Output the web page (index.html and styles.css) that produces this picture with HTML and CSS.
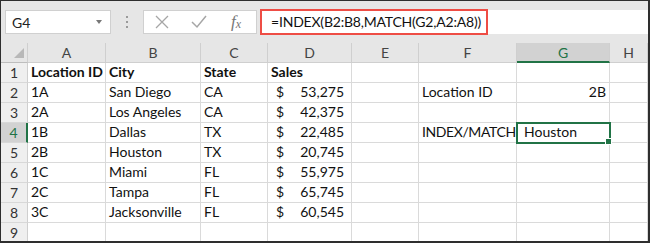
FILE: index.html
```html
<!DOCTYPE html>
<html lang="en">
<head>
  <meta charset="UTF-8" />
  <title>INDEX MATCH</title>
  <link rel="stylesheet" href="styles.css">
</head>
<body>
  <div class="window">
    <div class="formula-bar">
      <div class="name-box">
        <span>G4</span>
        <span class="drop"></span>
      </div>
      <div class="grip"><i></i><i></i><i></i></div>
      <div class="fx-buttons">
        <svg width="14" height="14" viewBox="0 0 14 14"><path d="M1 1 L13 13 M13 1 L1 13" stroke="#a6a6a6" stroke-width="1.3" fill="none"/></svg>
        <svg width="16" height="14" viewBox="0 0 16 14"><path d="M1 7 L6 12 L15 1" stroke="#a6a6a6" stroke-width="1.5" fill="none"/></svg>
        <span class="fx">f<sub>x</sub></span>
      </div>
      <div class="formula">
        <span class="highlight">=INDEX(B2:B8,MATCH(G2,A2:A8))</span>
      </div>
    </div>

    <div class="sheet">
      <div class="corner"><span class="tri"></span></div>
      <div class="col-head">A</div>
      <div class="col-head">B</div>
      <div class="col-head">C</div>
      <div class="col-head">D</div>
      <div class="col-head">E</div>
      <div class="col-head">F</div>
      <div class="col-head sel">G</div>
      <div class="col-head">H</div>

      <div class="row-head">1</div>
      <div class="cell bold">Location ID</div>
      <div class="cell bold">City</div>
      <div class="cell bold">State</div>
      <div class="cell bold">Sales</div>
      <div class="cell"></div><div class="cell"></div><div class="cell"></div><div class="cell"></div>

      <div class="row-head">2</div>
      <div class="cell">1A</div>
      <div class="cell">San Diego</div>
      <div class="cell">CA</div>
      <div class="cell money"><span>$</span><span>53,275</span></div>
      <div class="cell"></div>
      <div class="cell">Location ID</div>
      <div class="cell right">2B</div>
      <div class="cell"></div>

      <div class="row-head">3</div>
      <div class="cell">2A</div>
      <div class="cell">Los Angeles</div>
      <div class="cell">CA</div>
      <div class="cell money"><span>$</span><span>42,375</span></div>
      <div class="cell"></div><div class="cell"></div><div class="cell"></div><div class="cell"></div>

      <div class="row-head sel">4</div>
      <div class="cell">1B</div>
      <div class="cell">Dallas</div>
      <div class="cell">TX</div>
      <div class="cell money"><span>$</span><span>22,485</span></div>
      <div class="cell"></div>
      <div class="cell tight">INDEX/MATCH</div>
      <div class="cell active">Houston</div>
      <div class="cell"></div>

      <div class="row-head">5</div>
      <div class="cell">2B</div>
      <div class="cell">Houston</div>
      <div class="cell">TX</div>
      <div class="cell money"><span>$</span><span>20,745</span></div>
      <div class="cell"></div><div class="cell"></div><div class="cell"></div><div class="cell"></div>

      <div class="row-head">6</div>
      <div class="cell">1C</div>
      <div class="cell">Miami</div>
      <div class="cell">FL</div>
      <div class="cell money"><span>$</span><span>55,975</span></div>
      <div class="cell"></div><div class="cell"></div><div class="cell"></div><div class="cell"></div>

      <div class="row-head">7</div>
      <div class="cell">2C</div>
      <div class="cell">Tampa</div>
      <div class="cell">FL</div>
      <div class="cell money"><span>$</span><span>65,745</span></div>
      <div class="cell"></div><div class="cell"></div><div class="cell"></div><div class="cell"></div>

      <div class="row-head">8</div>
      <div class="cell">3C</div>
      <div class="cell">Jacksonville</div>
      <div class="cell">FL</div>
      <div class="cell money"><span>$</span><span>60,545</span></div>
      <div class="cell"></div><div class="cell"></div><div class="cell"></div><div class="cell"></div>

      <div class="row-head">9</div>
      <div class="cell"></div><div class="cell"></div><div class="cell"></div><div class="cell"></div>
      <div class="cell"></div><div class="cell"></div><div class="cell"></div><div class="cell"></div>
    </div>
  </div>
</body>
</html>
```

FILE: styles.css
```css
* {
  margin: 0;
  padding: 0;
  box-sizing: border-box;
}

body {
  background-color: #2e2e2e;
  font-family: 'Lato', 'Liberation Sans', sans-serif;
  width: 650px;
  height: 243px;
  overflow: hidden;
}

.window {
  margin: 1px 2px 0 1px;
  height: 240px;
  background-color: #e6e6e6;
  overflow: hidden;
}

/* formula bar */
.formula-bar {
  height: 42px;
  display: flex;
  align-items: center;
  padding-left: 4px;
}

.name-box {
  width: 106px;
  height: 24px;
  background-color: #fff;
  border: 1px solid #d0d0d0;
  display: flex;
  align-items: center;
  justify-content: space-between;
  padding: 0 8px 0 6px;
  font-size: 14px;
  color: #222;
}

.drop {
  width: 0;
  height: 0;
  border-left: 3px solid transparent;
  border-right: 3px solid transparent;
  border-top: 4px solid #777;
}

.grip {
  width: 32px;
  display: flex;
  flex-direction: column;
  align-items: center;
  gap: 3px;
}

.grip i {
  display: block;
  width: 2px;
  height: 2px;
  background-color: #9a9a9a;
}

.fx-buttons {
  width: 114px;
  height: 24px;
  background-color: #fff;
  border: 1px solid #d0d0d0;
  display: flex;
  align-items: center;
  padding-left: 11px;
  gap: 22px;
}

.fx {
  font-family: 'Liberation Serif', serif;
  font-style: italic;
  font-size: 17px;
  color: #777;
  margin-left: 2px;
}

.fx sub {
  font-size: 12px;
  vertical-align: -1px;
}

.formula {
  flex: 1;
  margin-left: 3px;
  height: 24px;
  background-color: #fff;
  display: flex;
  align-items: center;
}

.highlight {
  width: 228px;
  height: 26px;
  border: 2px solid #ee4d45;
  font-size: 14px;
  letter-spacing: -0.2px;
  color: #111;
  padding-left: 9px;
  line-height: 22px;
  white-space: nowrap;
}

/* sheet grid */
.sheet {
  display: grid;
  grid-template-columns: 27px 78px 95px 67px 84px 67px 98px 93px 1fr;
  grid-auto-rows: 20px;
  background-color: #fff;
}

.corner,
.col-head,
.row-head {
  background-color: #e6e6e6;
  border-right: 1px solid #cfcfcf;
  border-bottom: 1px solid #cfcfcf;
  color: #444;
  font-size: 14px;
  display: flex;
  align-items: center;
  justify-content: center;
}

.corner {
  position: relative;
  border-bottom: 1px solid #bdbdbd;
}

.tri {
  position: absolute;
  right: 3px;
  bottom: 4px;
  width: 0;
  height: 0;
  border-left: 10px solid transparent;
  border-bottom: 10px solid #b8b8b8;
}

.col-head.sel {
  background-color: #d2d2d2;
  border-bottom: 2px solid #217346;
  color: #217346;
}

.row-head {
  background-color: #efefef;
  border-right: 1px solid #cfcfcf;
  border-bottom: 1px solid #d8d8d8;
  color: #333;
}

.row-head.sel {
  background-color: #d2d2d2;
  border-right: 2px solid #217346;
  color: #217346;
}

.cell {
  border-right: 1px solid #dadada;
  border-bottom: 1px solid #dadada;
  font-size: 14px;
  color: #111;
  padding: 0 3px 2px 3px;
  display: flex;
  align-items: flex-end;
  white-space: nowrap;
  overflow: visible;
}

.bold {
  font-weight: bold;
}

.right {
  justify-content: flex-end;
}

.tight {
  letter-spacing: -0.4px;
}

.money {
  justify-content: space-between;
  padding: 0 7px 2px 8px;
}

.active {
  position: relative;
  outline: 2px solid #217346;
  outline-offset: -1px;
  padding-left: 7px;
}

.active::after {
  content: '';
  position: absolute;
  right: -3px;
  bottom: -3px;
  width: 5px;
  height: 5px;
  background-color: #217346;
  border: 1px solid #fff;
}
```
